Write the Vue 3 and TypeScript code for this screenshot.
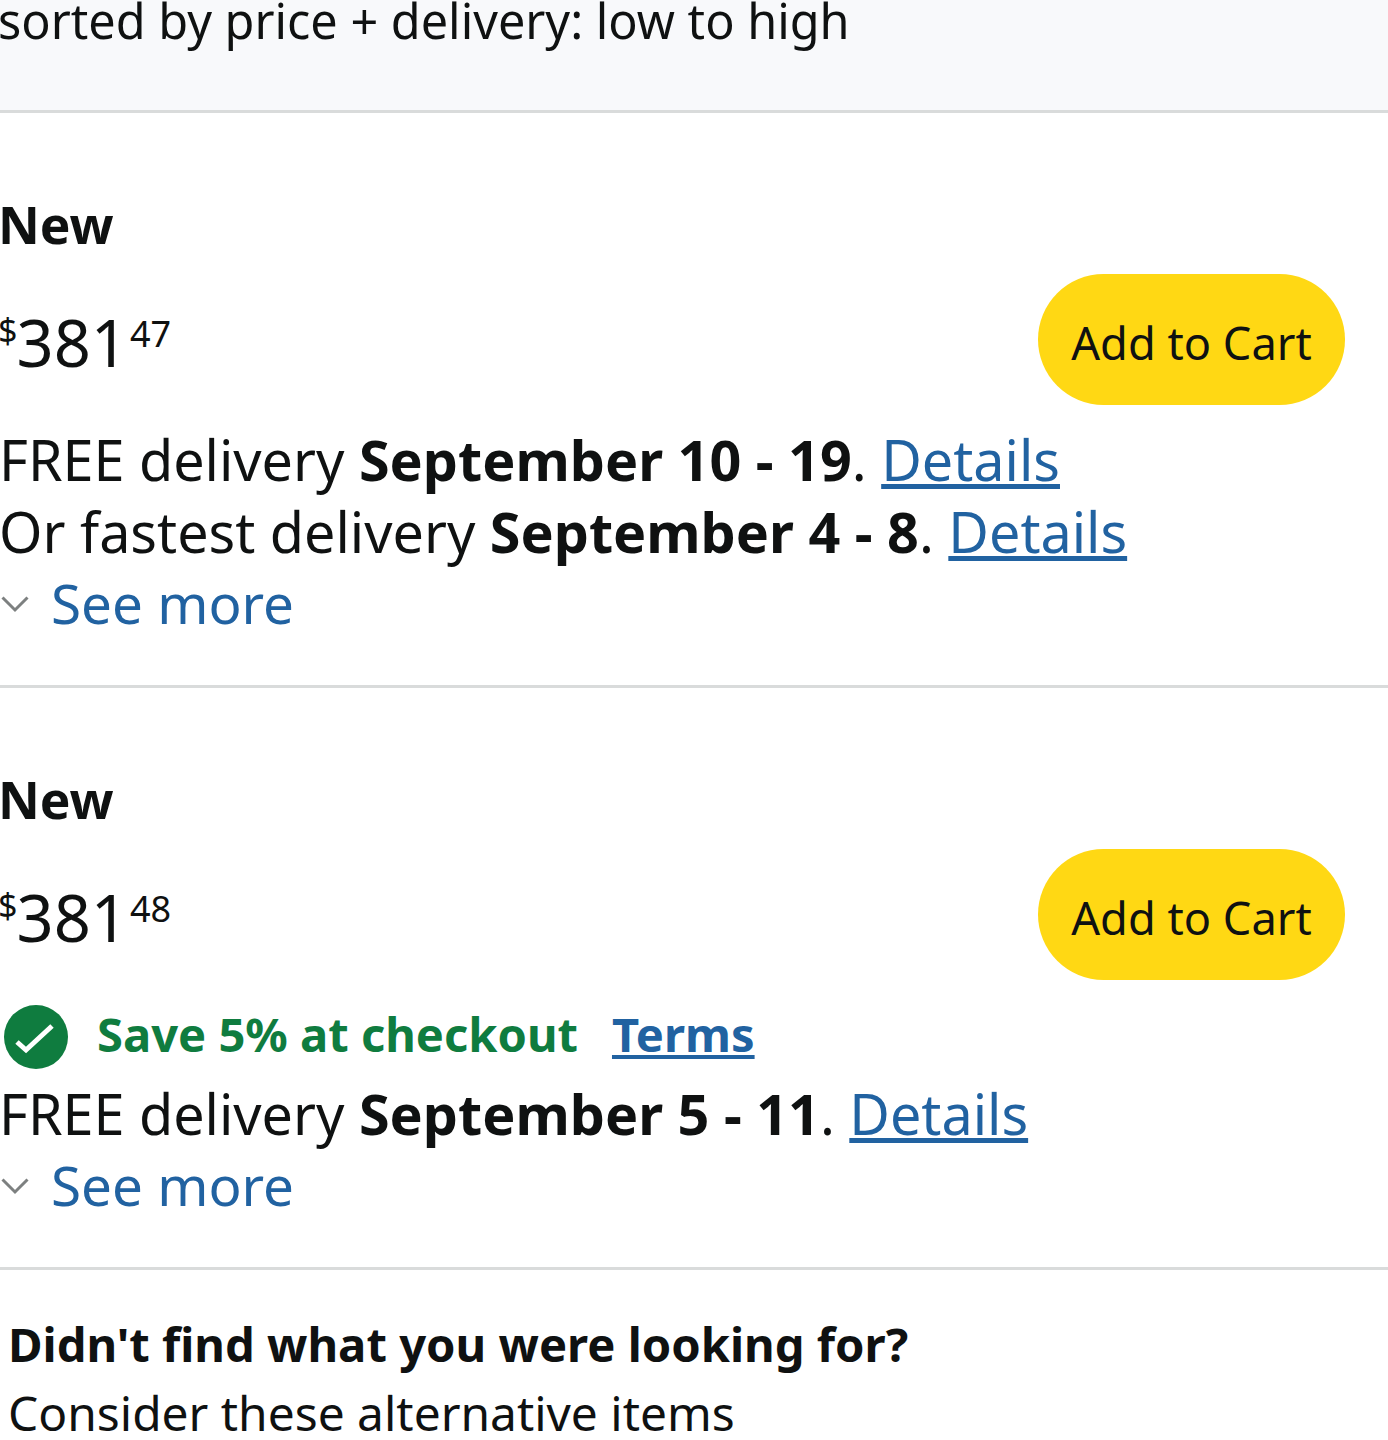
<script setup lang="ts">
interface Line { before: string; bold: string }
interface Offer { cents: string; save: boolean; lines: Line[] }
const offers: Offer[] = [
  { cents: '47', save: false, lines: [
    { before: 'FREE delivery ', bold: 'September 10 - 19' },
    { before: 'Or fastest delivery ', bold: 'September 4 - 8' },
  ] },
  { cents: '48', save: true, lines: [
    { before: 'FREE delivery ', bold: 'September 5 - 11' },
  ] },
]
</script>

<template>
  <div class="page">
    <header class="sort"><div class="sort-text">sorted by price + delivery: low to high</div></header>
    <section v-for="o in offers" :key="o.cents" class="offer">
      <h2 class="cond">New</h2>
      <div class="buy">
        <div class="price"><span class="sym">$</span><span class="whole">381</span><span class="cents">{{ o.cents }}</span></div>
        <button class="cart">Add to Cart</button>
      </div>
      <div v-if="o.save" class="save">
        <svg class="check" viewBox="0 0 64 64" width="64" height="64">
          <circle cx="32" cy="32" r="32" fill="#0f7c3f" />
          <path d="M13 37 L22 45 L48 21" fill="none" stroke="#fff" stroke-width="5" />
        </svg>
        <span class="save-text">Save 5% at checkout</span>
        <a class="terms">Terms</a>
      </div>
      <div class="lines" :class="{ 'after-save': o.save }">
        <div v-for="l in o.lines" :key="l.bold" class="line">{{ l.before }}<b>{{ l.bold }}</b>. <a class="link">Details</a></div>
      </div>
      <div class="more">
        <svg class="chev" viewBox="0 0 28 18" width="28" height="18"><path d="M1.5 2.5 L14 15 L26.5 2.5" fill="none" stroke="#7d8080" stroke-width="3" /></svg>
        <a class="more-link">See more</a>
      </div>
    </section>
    <section class="alt">
      <div class="alt-title">Didn't find what you were looking for?</div>
      <div class="alt-sub">Consider these alternative items</div>
    </section>
  </div>
</template>

<style>
html, body { margin: 0; background: #fff; overflow: hidden; }
</style>

<style scoped>
.page { width: 1388px; height: 1440px; overflow: hidden; font-family: "Noto Sans", "Open Sans", sans-serif; color: #0f1111; }
.sort { height: 110px; background: #f8f9fb; border-bottom: 3px solid #d9dbdb; overflow: hidden; }
.sort-text { margin: -16px 0 0 -2px; font-size: 48.6px; line-height: 72px; white-space: nowrap; }
.offer { padding: 78px 0 44px; border-bottom: 3px solid #d9dbdb; }
.cond { margin: 0 0 0 -2px; padding-bottom: 4px; font-size: 51.5px; line-height: 66px; font-weight: 700; }
.buy { display: flex; justify-content: space-between; align-items: flex-start; margin-top: 13px; padding-right: 43px; }
.price { display: flex; align-items: flex-start; margin-top: 36px; margin-left: -2px; line-height: 1; }
.sym { font-size: 34px; margin-top: 3px; }
.whole { font-size: 65px; margin-left: -1px; }
.cents { font-size: 36px; margin: 6px 0 0 2px; }
.cart { width: 307px; height: 131px; border: 0; border-radius: 66px; background: #ffd814; color: #0f1111; font: 45.2px "Noto Sans", sans-serif; padding: 6px 0 0; }
.lines { margin-top: 20px; }
.lines.after-save { margin-top: 10px; }
.line { font-size: 55.7px; line-height: 68px; padding-bottom: 4px; white-space: nowrap; margin-left: -1px; }
.line b { font-weight: 700; }
.link, .terms { color: #2162a1; text-decoration: underline; }
.more { display: flex; align-items: center; height: 72px; }
.chev { margin: 0 0 2px 1px; }
.more-link { margin-left: 22px; padding-bottom: 6px; font-size: 54.8px; color: #2162a1; }
.save { display: flex; align-items: center; height: 64px; margin: 25px 0 0 4px; }
.save-text { margin-left: 29px; padding-bottom: 6px; font-size: 47.1px; font-weight: 700; color: #0f7c3f; }
.terms { margin-left: 34px; padding-bottom: 0; margin-bottom: 6px; font-size: 47.1px; font-weight: 700; }
.alt { padding: 39px 0 0 8px; }
.alt-title { font-size: 47.2px; line-height: 70px; font-weight: 700; white-space: nowrap; }
.alt-sub { font-size: 47.9px; line-height: 66px; margin-top: 1px; white-space: nowrap; }
</style>
